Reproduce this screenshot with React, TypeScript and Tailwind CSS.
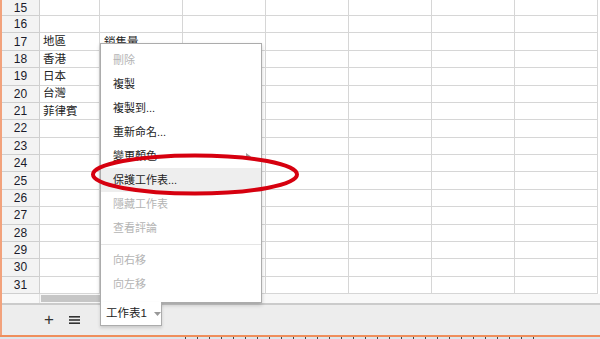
import React from "react";

const rows = [15, 16, 17, 18, 19, 20, 21, 22, 23, 24, 25, 26, 27, 28, 29, 30, 31];
const colA: Record<number, string> = { 17: "地區", 18: "香港", 19: "日本", 20: "台灣", 21: "菲律賓" };
const colB: Record<number, string> = { 17: "銷售量" };

const font = { fontFamily: '"Liberation Sans", "Noto Sans CJK TC", sans-serif' };

type Item = { label: string; disabled?: boolean; active?: boolean; arrow?: boolean } | "sep";
const items: Item[] = [
  { label: "刪除", disabled: true },
  { label: "複製" },
  { label: "複製到..." },
  { label: "重新命名..." },
  { label: "變更顏色", arrow: true },
  { label: "保護工作表...", active: true },
  { label: "隱藏工作表", disabled: true },
  { label: "查看評論", disabled: true },
  "sep",
  { label: "向右移", disabled: true },
  { label: "向左移", disabled: true },
];

export default function App() {
  return (
    <div className="relative w-[600px] h-[339px] overflow-hidden bg-white text-[11px] text-[#222]" style={font}>
      <div className="flex flex-col h-[339px]">
        <div className="flex flex-1 min-h-0">
          <div className="w-[2px] bg-[#f2a27c] shrink-0" />
          <div className="flex flex-col flex-1">
            {/* grid */}
            <div className="flex flex-col">
              {rows.map((r, i) => (
                <div key={r} className={`flex ${i === 0 ? "h-[16px]" : "h-[17.375px]"}`}>
                  <div className="w-[38px] shrink-0 bg-[#f3f3f3] border-r border-b border-[#cfcfcf] flex items-center justify-center text-[12px] text-[#1a1a2a]">
                    {r}
                  </div>
                  <div className="w-[60px] shrink-0 border-r border-b border-[#d6d6d6] flex items-center pl-[3px] pt-[1px] leading-none text-[11.5px]">
                    {colA[r] ?? ""}
                  </div>
                  <div className="w-[83px] shrink-0 border-r border-b border-[#d6d6d6] flex items-center pl-[4px] pt-[2px] leading-none text-[11.5px]">
                    {colB[r] ?? ""}
                  </div>
                  {[0, 1, 2, 3, 4].map((c) => (
                    <div key={c} className="w-[83px] shrink-0 border-r border-b border-[#d6d6d6]" />
                  ))}
                </div>
              ))}
            </div>
            {/* scrollbar band */}
            <div className="flex h-[9px] bg-[#f8f8f8]">
              <div className="w-[38px] shrink-0 border-r border-[#e2e2e2]" />
              <div className="w-[160px] ml-[1px] my-[1px] bg-[#c6c6c6]" />
            </div>
            <div className="h-[2px] bg-[#cbcbcb]" />
            {/* sheet bar */}
            <div className="flex-1 bg-[#ededed] flex items-start">
              <div className="w-[41px]" />
              <div className="flex items-center gap-[14px] mt-[6px] text-[#333]">
                <span className="text-[17px] leading-none w-[12px] text-center">+</span>
                <svg width="11" height="10" viewBox="0 0 11 10">
                  <rect x="0" y="1" width="11" height="1.6" fill="#333" />
                  <rect x="0" y="4.2" width="11" height="1.6" fill="#333" />
                  <rect x="0" y="7.4" width="11" height="1.6" fill="#333" />
                </svg>
              </div>
            </div>
          </div>
        </div>
        <div className="h-[2px] bg-[#ef8e5c]" />
        <div className="h-[2px] bg-[#dde6eb] flex">
          <div className="w-[185px]" />
          {Array.from({ length: 30 }).map((_, i) => (
            <div key={i} className="w-[1px] h-[2px] bg-[#444] mr-[11px]" />
          ))}
        </div>
      </div>

      {/* context menu */}
      <div className="absolute left-[100px] top-[43px] w-[162px] h-[260px] bg-white border border-[#acacac] shadow-[0_2px_4px_rgba(0,0,0,0.2)] py-[4px]">
        {items.map((it, i) =>
          it === "sep" ? (
            <div key={i} className="h-[8px] flex items-center">
              <div className="w-full h-[1px] bg-[#e5e5e5]" />
            </div>
          ) : (
            <div
              key={i}
              className={`relative h-[24px] flex items-center pl-[12px] pt-[1px] text-[11px] ${
                it.active ? "bg-[#eeeeee]" : ""
              } ${it.disabled ? "text-[#b4b4b4]" : "text-[#222]"}`}
            >
              {it.label}
              {it.arrow && (
                <svg className="absolute right-[10px] top-[9px]" width="5" height="7" viewBox="0 0 5 7">
                  <path d="M0 0 L5 3.5 L0 7 Z" fill="#9a9a9a" />
                </svg>
              )}
            </div>
          )
        )}
      </div>

      {/* sheet tab */}
      <div className="absolute left-[100px] top-[302px] w-[62px] h-[24px] bg-white border-l border-r border-b border-[#acacac] shadow-[0_2px_3px_rgba(0,0,0,0.15)] flex items-center pl-[5px] gap-[7px] text-[11.5px] text-[#222] whitespace-nowrap">
        <span className="leading-none">工作表1</span>
        <svg width="7" height="4" viewBox="0 0 7 4">
          <path d="M0 0 L7 0 L3.5 4 Z" fill="#999" />
        </svg>
      </div>

      {/* red ellipse annotation */}
      <svg className="absolute left-0 top-0 pointer-events-none" width="600" height="339">
        <ellipse cx="195" cy="174.5" rx="102" ry="19" fill="none" stroke="#d6000f" strokeWidth="4" />
      </svg>
    </div>
  );
}
